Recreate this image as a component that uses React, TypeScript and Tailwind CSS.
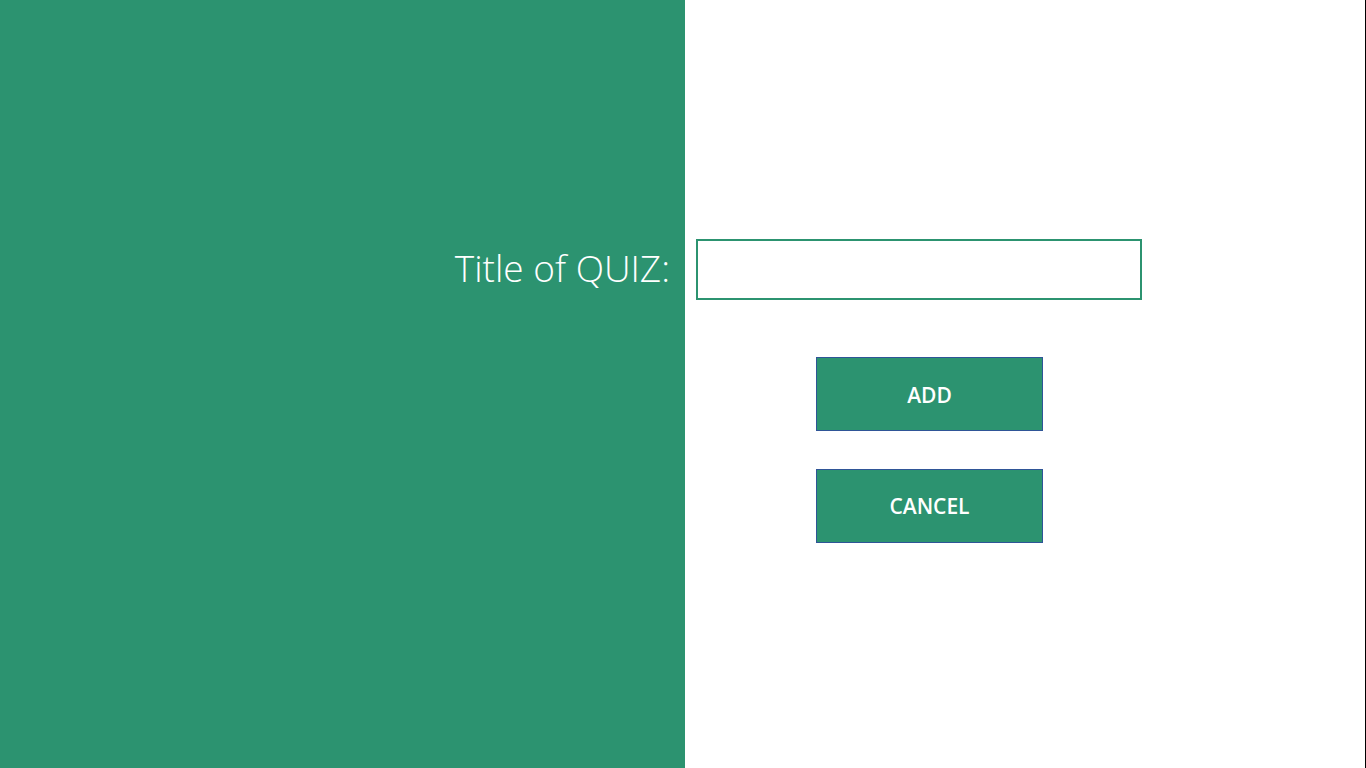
const App = () => {
  return (
    <div className="flex h-screen w-full overflow-hidden bg-white" style={{ fontFamily: '"Open Sans", "Noto Sans", sans-serif' }}>
      <div className="w-[685px] h-full bg-[#2c9370] flex justify-end">
        <div className="mt-[244px] mr-[15px] h-[48px] text-[37px] leading-[48px] font-light text-white">Title of QUIZ:</div>
      </div>
      <div className="flex-1 h-full border-r border-black flex flex-col items-start">
        <input
          type="text"
          className="mt-[239px] ml-[11px] w-[446px] h-[61px] border-2 border-[#2c9370] outline-none bg-white"
        />
        <button className="mt-[57px] ml-[131px] w-[227px] h-[74px] pt-[3px] bg-[#2c9370] border border-[#2f5597] text-white text-[21px] font-semibold">
          ADD
        </button>
        <button className="mt-[38px] ml-[131px] w-[227px] h-[74px] pt-[2px] bg-[#2c9370] border border-[#2f5597] text-white text-[21px] font-semibold">
          CANCEL
        </button>
      </div>
    </div>
  );
};

export default App;
